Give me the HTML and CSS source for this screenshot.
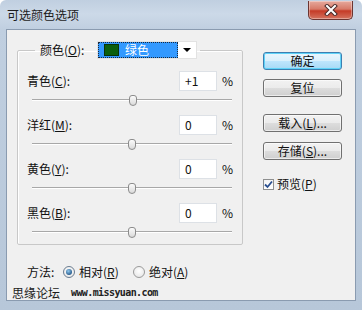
FILE: index.html
```html
<!DOCTYPE html>
<html lang="zh-CN">
<head>
  <meta charset="UTF-8" />
  <title>可选颜色选项</title>
  <link rel="stylesheet" href="styles.css">
</head>
<body>
  <div class="window">
    <div class="titlebar">
      <span class="title">可选颜色选项</span>
      <div class="close-btn">
        <svg width="14" height="12" viewBox="0 0 14 12">
          <path d="M3 2 L11 10 M11 2 L3 10" stroke="#4a2a28" stroke-width="4" stroke-linecap="square"/>
          <path d="M3 2 L11 10 M11 2 L3 10" stroke="#ffffff" stroke-width="2" stroke-linecap="square"/>
        </svg>
      </div>
    </div>

    <div class="client">
      <div class="main">
        <fieldset class="group">
          <legend class="group-head">
            <span class="head-label">颜色(<u>O</u>):</span>
            <div class="color-select">
              <div class="color-value"><span class="swatch"></span>绿色</div>
              <div class="color-arrow"></div>
            </div>
          </legend>

          <div class="adjust">
            <div class="adjust-top">
              <span class="adjust-label">青色(<u>C</u>):</span>
              <div class="num">+1</div>
              <span class="pct">%</span>
            </div>
            <div class="slider"><div class="track"></div><div class="thumb" style="left: calc(50.5% - 4px)"></div></div>
          </div>

          <div class="adjust">
            <div class="adjust-top">
              <span class="adjust-label">洋红(<u>M</u>):</span>
              <div class="num">0</div>
              <span class="pct">%</span>
            </div>
            <div class="slider"><div class="track"></div><div class="thumb" style="left: calc(50% - 4px)"></div></div>
          </div>

          <div class="adjust">
            <div class="adjust-top">
              <span class="adjust-label">黄色(<u>Y</u>):</span>
              <div class="num">0</div>
              <span class="pct">%</span>
            </div>
            <div class="slider"><div class="track"></div><div class="thumb" style="left: calc(50% - 4px)"></div></div>
          </div>

          <div class="adjust">
            <div class="adjust-top">
              <span class="adjust-label">黑色(<u>B</u>):</span>
              <div class="num">0</div>
              <span class="pct">%</span>
            </div>
            <div class="slider"><div class="track"></div><div class="thumb" style="left: calc(50% - 4px)"></div></div>
          </div>
        </fieldset>

        <div class="method">
          <span class="method-label">方法:</span>
          <span class="radio checked"></span>
          <span class="radio-text">相对(<u>R</u>)</span>
          <span class="radio"></span>
          <span class="radio-text">绝对(<u>A</u>)</span>
        </div>

        <div class="watermark">
          <span class="wm-name">思缘论坛</span>
          <span class="wm-url">www.missyuan.com</span>
        </div>
      </div>

      <div class="side">
        <div class="btn btn-default">确定</div>
        <div class="btn btn-reset">复位</div>
        <div class="btn btn-load">载入(<u>L</u>)...</div>
        <div class="btn btn-save">存储(<u>S</u>)...</div>
        <div class="check-row">
          <span class="checkbox">
            <svg width="9" height="9" viewBox="0 0 9 9">
              <path d="M1 4.5 L3.5 7 L8 1.5" fill="none" stroke="#2a4f8f" stroke-width="1.8"/>
            </svg>
          </span>
          <span class="check-text">预览(<u>P</u>)</span>
        </div>
      </div>
    </div>
  </div>
</body>
</html>
```

FILE: styles.css
```css
* {
  margin: 0;
  padding: 0;
  box-sizing: border-box;
}

body {
  width: 362px;
  height: 310px;
  overflow: hidden;
  background: #ffffff;
  font-family: "Noto Sans CJK SC", sans-serif;
  font-size: 12px;
  line-height: 14px;
  color: #111;
}

u {
  text-decoration: underline;
  text-underline-offset: 1px;
}

/* window frame */
.window {
  width: 362px;
  height: 310px;
  display: flex;
  flex-direction: column;
  border-radius: 6px 6px 0 0;
  background: linear-gradient(to bottom, #c0cfe0 0, #ccd9e8 14px, #c0cfe0 29px, #b7c7d9 100%);
}

.titlebar {
  height: 29px;
  display: flex;
  align-items: flex-start;
}

.title {
  padding: 8px 0 0 7px;
  color: #1c1c1c;
}

.close-btn {
  margin-left: auto;
  margin-right: 9px;
  margin-top: 1px;
  width: 45px;
  height: 19px;
  display: flex;
  align-items: center;
  justify-content: center;
  border: 1px solid #6b3531;
  border-top: none;
  border-radius: 0 0 5px 5px;
  background: linear-gradient(to bottom, #e6aa9d 0, #d77a68 45%, #c53b27 55%, #d4735f 100%);
  box-shadow: inset 0 0 0 1px rgba(255, 255, 255, 0.35);
}

.client {
  margin-left: 6px;
  width: 350px;
  height: 272px;
  display: grid;
  grid-template-columns: 256px 79px;
  background: #f0f0f0;
  border: 1px solid #8a9bb0;
}

/* left column */
.main {
  display: flex;
  flex-direction: column;
}

.group {
  margin: 11px 0 0 10px;
  width: 226px;
  padding: 12px 0 1px 0;
  border: 1px solid #c8c8c8;
  border-radius: 2px;
  box-shadow: inset 1px 1px 0 #ffffff;
  display: flex;
  flex-direction: column;
  gap: 4px;
}

.group-head {
  margin-left: 17px;
  height: 18px;
  padding: 0 3px 0 5px;
  display: flex;
  align-items: center;
}

.head-label {
  width: 57px;
}

.color-select {
  width: 100px;
  height: 18px;
  display: flex;
  background: #ffffff;
  border: 1px solid #e2e2e2;
}

.color-value {
  width: 80px;
  height: 16px;
  display: flex;
  align-items: center;
  gap: 6px;
  padding-left: 5px;
  background: #3399ff;
  border: 1px dotted #1a2a40;
  color: #ffffff;
}

.swatch {
  width: 15px;
  height: 12px;
  background: #0b5f0d;
  border: 1px solid #08340a;
}

.color-arrow {
  flex: 1;
  display: flex;
  align-items: center;
  justify-content: center;
}

.color-arrow::after {
  content: '';
  border-left: 4px solid transparent;
  border-right: 4px solid transparent;
  border-top: 4px solid #000;
}

.adjust {
  display: flex;
  flex-direction: column;
}

.adjust-top {
  height: 20px;
  display: grid;
  grid-template-columns: 1fr 38px 25px;
  align-items: center;
  padding-left: 9px;
}

.num {
  height: 20px;
  padding-left: 5px;
  line-height: 18px;
  background: #ffffff;
  border: 1px solid #dde1e6;
}

.pct {
  padding-left: 5px;
}

.slider {
  position: relative;
  height: 20px;
  margin: 0 10px 0 14px;
}

.track {
  margin-top: 8px;
  height: 2px;
  border-top: 1px solid #a8a8a8;
  border-bottom: 1px solid #ffffff;
}

.thumb {
  position: absolute;
  top: 4px;
  width: 8px;
  height: 11px;
  border: 1px solid #8c8c8c;
  border-radius: 3px 3px 4px 4px;
  background: linear-gradient(to bottom, #fbfbfb, #dadada);
}

.method {
  margin: 17px 0 0 20px;
  height: 20px;
  display: flex;
  align-items: center;
}

.method-label {
  width: 36px;
}

.radio {
  width: 12px;
  height: 12px;
  border-radius: 50%;
  border: 1px solid #9a9a9a;
  background: radial-gradient(circle at 50% 40%, #ffffff, #e2e2e2);
  display: flex;
  align-items: center;
  justify-content: center;
}

.radio.checked {
  border-color: #6a7c90;
}

.radio.checked::after {
  content: '';
  width: 6px;
  height: 6px;
  border-radius: 50%;
  background: radial-gradient(circle at 40% 35%, #8fc8ee, #2c5f8f 70%);
}

.radio-text {
  margin-left: 4px;
  width: 54px;
}

.watermark {
  margin: 4px 0 0 5px;
  height: 14px;
  display: flex;
  align-items: center;
  gap: 11px;
}

.wm-name {
  font-size: 12px;
  color: #1a1a1a;
}

.wm-url {
  font-family: "DejaVu Sans Mono", monospace;
  font-weight: bold;
  font-size: 10px;
  letter-spacing: -0.6px;
  color: #222;
}

/* right column */
.side {
  display: flex;
  flex-direction: column;
}

.btn {
  height: 18px;
  display: flex;
  align-items: center;
  justify-content: center;
  border: 1px solid #707070;
  border-radius: 3px;
  background: linear-gradient(to bottom, #f2f2f2 0, #ebebeb 50%, #dddddd 51%, #cfcfcf 100%);
  box-shadow: inset 0 0 0 1px rgba(255, 255, 255, 0.6);
}

.btn-default {
  margin-top: 22px;
  border-color: #3c7fb1;
  background: linear-gradient(to bottom, #eaf6fd 0, #d9f0fc 50%, #bee6fd 51%, #a7d9f5 100%);
  box-shadow: inset 0 0 0 1px #5fd3f8;
}

.btn-reset {
  margin-top: 9px;
}

.btn-load {
  margin-top: 17px;
}

.btn-save {
  margin-top: 10px;
}

.check-row {
  margin-top: 18px;
  height: 12px;
  display: flex;
  align-items: center;
  gap: 3px;
}

.checkbox {
  width: 11px;
  height: 11px;
  border: 1px solid #8e8f8f;
  background: linear-gradient(to bottom, #f4f4f4, #ffffff);
  display: flex;
  align-items: center;
  justify-content: center;
}
```
